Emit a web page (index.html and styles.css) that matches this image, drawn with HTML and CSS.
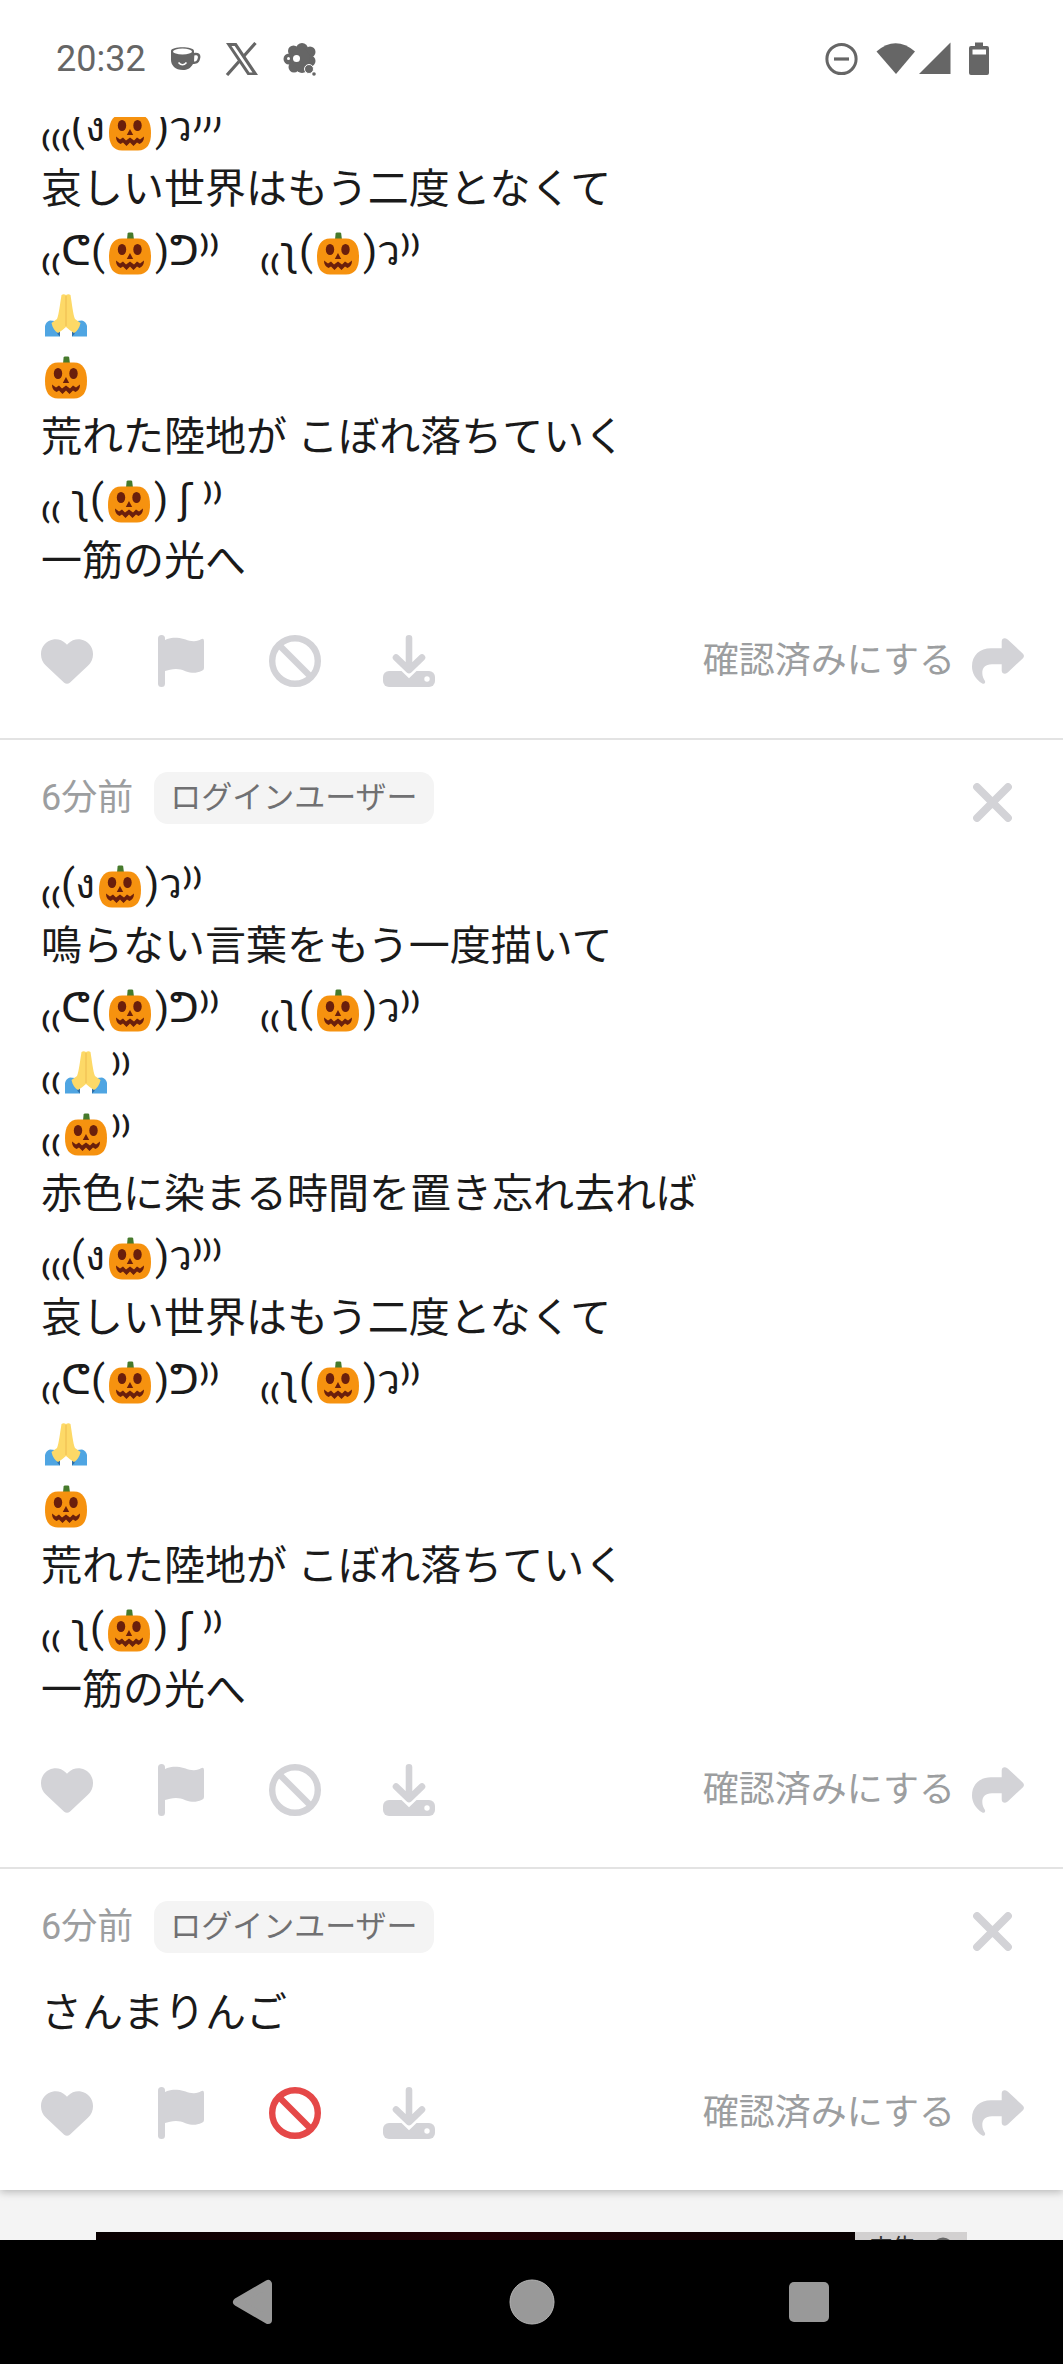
FILE: index.html
```
<!DOCTYPE html>
<html lang="ja">
  <head>
    <meta charset="UTF-8" />
    <meta name="viewport" content="width=device-width, initial-scale=1.0" />
    <title>メッセージ</title>
    <link rel="stylesheet" href="styles.css">
  </head>

  <body>
    <!-- Shared icons -->
    <svg class="sprite" aria-hidden="true">
      <symbol id="pumpkin" viewBox="0 0 42 43">
        <path d="M18 8 L18.6 1.5 Q18.8 0.5 20 0.5 H23 Q24 0.5 24.2 1.5 L25 8 Z" fill="#467a2c" />
        <path d="M13 6.5 H29 C38 6.5 42 14 42 25 C42 36 38 42.5 29 42.5 H13 C4 42.5 0 36 0 25 C0 14 4 6.5 13 6.5 Z" fill="#f6920f" />
        <ellipse cx="13" cy="17.5" rx="4.2" ry="5.6" fill="#6a1f0c" />
        <ellipse cx="28.5" cy="17.5" rx="4.2" ry="5.6" fill="#6a1f0c" />
        <path d="M21 21 L24.2 27 H17.8 Z" fill="#6a1f0c" />
        <path d="M7 28.5 L11 31.5 L14 29.5 L17 32.5 L21 29.5 L25 32.5 L28 29.5 L31 31.5 L35 28.5 C35 32.5 33.5 34.5 30.5 36 L28 34.5 L24.5 38 L21 34.5 L17.5 38 L14 34.5 L11.5 36 C8.5 34.5 7 32.5 7 28.5 Z" fill="#6a1f0c" />
      </symbol>
      <symbol id="pray" viewBox="0 0 42 43">
        <path d="M0 42.5 V32 Q1 27.5 5 26.5 L10 27 L15 38 V42.5 Z" fill="#4fa5e2" />
        <path d="M42 42.5 V32 Q41 27.5 37 26.5 L32 27 L27 38 V42.5 Z" fill="#4fa5e2" />
        <path d="M12 36 L15 38 V42.5 L12.5 40 Z M30 36 L27 38 V42.5 L29.5 40 Z" fill="#2f6fa8" />
        <path d="M16.5 1 Q18.5 -0.5 21 1 Q23.5 -0.5 25.5 1 C27 10 28 20 30 25 L35.5 29 C34.5 34 32 37.5 29 39 C25 36.5 23 34.5 21 33 C19 34.5 17 36.5 13 39 C10 37.5 7.5 34 6.5 29 L12 25 C14 20 15 10 16.5 1 Z" fill="#fdd967" />
        <path d="M21 2 V32" stroke="#eebb50" stroke-width="1" fill="none" />
      </symbol>
      <symbol id="heart" viewBox="0 0 512 512">
        <path d="M47.6 300.4L228.3 469.1c7.5 7 17.4 10.9 27.7 10.9s20.2-3.9 27.7-10.9L464.4 300.4c30.4-28.3 47.6-68 47.6-109.5v-5.8c0-69.9-50.5-129.5-119.4-141C347 36.5 300.6 51.4 268 84L256 96 244 84c-32.6-32.6-79-47.5-124.6-39.9C50.5 55.6 0 115.2 0 185.1v5.8c0 41.5 17.2 81.2 47.6 109.5z" fill="currentColor" />
      </symbol>
      <symbol id="flag" viewBox="0 0 52 52">
        <rect x="3" y="0" width="7" height="52" rx="3.5" fill="currentColor" />
        <path d="M9 5.5 C14 3 18 2.7 22 2.8 C29 3 33 6.5 39 6.3 C42 6.2 44.5 5 46 4.2 Q49 3 49 6 V33 Q49 35 47 35.8 C43 37.7 40 38 37 37.8 C31 37.5 28 34 21 34 C17 34 13 35 9 36.3 Z" fill="currentColor" />
      </symbol>
      <symbol id="ban" viewBox="0 0 52 52">
        <circle cx="26" cy="26" r="22.8" fill="none" stroke="currentColor" stroke-width="6.4" />
        <path d="M10 10 L42 42" stroke="currentColor" stroke-width="6.4" />
      </symbol>
      <symbol id="download" viewBox="0 0 52 52">
        <rect x="0" y="36" width="52" height="16" rx="6" fill="currentColor" />
        <circle cx="44" cy="44" r="2.7" fill="#fff" />
        <path d="M13 22.5 L26 35 L39 22.5" fill="none" stroke="#fff" stroke-width="12" />
        <path d="M26 3.3 V34 M13 22.5 L26 35 L39 22.5" fill="none" stroke="currentColor" stroke-width="6.6" stroke-linecap="round" stroke-linejoin="round" />
      </symbol>
      <symbol id="share" viewBox="0 0 52 52">
        <path d="M29.7 13.3 V6.5 Q29.9 3 33 3.2 Q34.5 3.4 36 4.7 L50.7 18.4 Q53.2 20.9 50.7 23.4 L36 37.3 Q34.5 38.7 33 38.8 Q29.9 38.8 29.7 35.5 V29.3 H20 C13 29.3 10.3 33 10.3 38 C10.3 41.5 11.5 43.5 12.7 45.5 C14 47.7 12.3 49.5 10.3 48.5 C3.5 44.5 0 38 0 31.5 C0 20 8 13.3 19 13.3 Z" fill="currentColor" />
      </symbol>
      <symbol id="close" viewBox="0 0 39 39">
        <path d="M4 4 L35 35 M35 4 L4 35" stroke="currentColor" stroke-width="7.8" stroke-linecap="round" />
      </symbol>
    </svg>

    <header class="status-bar">
      <div class="status-left">
        <span class="clock">20:32</span>
        <svg width="31" height="34" viewBox="0 0 31 34">
          <path d="M1 9 C1 4 24 4 24 9 V11 C29 10 31.500 13 30 17 C29 21.500 26 22 23 22 C20.500 26.500 17 28 13 28 C5 28 1 23 1 18 Z" fill="#666" />
          <ellipse cx="12.500" cy="9.500" rx="9.500" ry="3" fill="#fff" />
          <path d="M24.300 13.500 C28 12.500 28.500 15 27.500 17 C27 18.800 25.500 19.500 24 19.600 Z" fill="#fff" />
          <path d="M8.500 20.500 Q12.500 25 16.500 20.500" fill="none" stroke="#fff" stroke-width="1.600" />
        </svg>
        <svg width="34" height="34" viewBox="0 0 34 34">
          <path d="M1 1 H11.500 L33 33 H22.500 Z M6.500 4 L24.500 30.500 H27.500 L9.700 4 Z" fill="#666" fill-rule="evenodd" />
          <path d="M30.500 1 L18.500 14.500 M14 19.500 L2 33" stroke="#666" stroke-width="3.200" />
        </svg>
        <svg width="34" height="34" viewBox="0 0 34 34">
          <g fill="#666">
            <circle cx="19" cy="7" r="6" />
            <circle cx="10.500" cy="9" r="5.500" />
            <circle cx="27" cy="10" r="5.500" />
            <circle cx="6" cy="17" r="5.500" />
            <circle cx="27" cy="19" r="5.500" />
            <circle cx="11" cy="25" r="5.500" />
            <circle cx="19" cy="25" r="6" />
            <circle cx="17" cy="16" r="10" />
            <circle cx="26" cy="27" r="4.500" stroke="#fff" />
            <circle cx="31" cy="32" r="1.800" />
          </g>
          <circle cx="5.500" cy="16.500" r="1.500" fill="#fff" />
          <circle cx="13.500" cy="16.500" r="3.500" fill="#fff" />
        </svg>
      </div>
      <svg width="164" height="34" viewBox="0 0 164 34" aria-label="Wi-Fi">
        <circle cx="16.500" cy="17" r="14.600" fill="none" stroke="#666" stroke-width="3" />
        <path d="M9 17 H24" stroke="#666" stroke-width="3.200" />
        <path d="M51.500 9.500 Q70.500 -7 90 9.500 L71 32 Z" fill="#666" />
        <path d="M94 32 L125.500 0.500 V32 Z" fill="#666" />
        <path d="M150 0.500 H158 V4 H162 Q164 4 164 6 V31 Q164 33 162 33 H146 Q144 33 144 31 V6 Q144 4 146 4 H150 Z M147.500 7.500 V12.500 H161 V7.500 Z" fill="#666" fill-rule="evenodd" />
      </svg>
    </header>

    <main class="content">
      <div class="posts">
        <article class="post post-scrolled">
          <p class="post-text">
            ₍₍₍(ง<svg class="emoji" role="img" aria-label="🎃"><use href="#pumpkin" /></svg>)ว⁾⁾⁾<br>
            哀しい世界はもう二度となくて<br>
            ₍₍ᕦ(<svg class="emoji" role="img" aria-label="🎃"><use href="#pumpkin" /></svg>)ᕤ⁾⁾　₍₍<span class="arm">ʅ</span>(<svg class="emoji" role="img" aria-label="🎃"><use href="#pumpkin" /></svg>)ว⁾⁾<br>
            <svg class="emoji" role="img" aria-label="🙏"><use href="#pray" /></svg><br>
            <svg class="emoji" role="img" aria-label="🎃"><use href="#pumpkin" /></svg><br>
            荒れた陸地が こぼれ落ちていく<br>
            ₍₍ <span class="arm">ʅ</span>(<svg class="emoji" role="img" aria-label="🎃"><use href="#pumpkin" /></svg>) <span class="arm">ʃ</span> ⁾⁾<br>
            一筋の光へ
          </p>
          <div class="actions">
            <button type="button" aria-label="いいね"><svg class="icon"><use href="#heart" /></svg></button>
            <button type="button" aria-label="通報"><svg class="icon"><use href="#flag" /></svg></button>
            <button type="button" aria-label="ブロック"><svg class="icon"><use href="#ban" /></svg></button>
            <button type="button" aria-label="保存"><svg class="icon"><use href="#download" /></svg></button>
            <button type="button" class="confirm"><span>確認済みにする</span><svg class="icon"><use href="#share" /></svg></button>
          </div>
        </article>

        <article class="post">
          <div class="post-head">
            <time class="time">6分前</time>
            <span class="user-tag">ログインユーザー</span>
            <button type="button" class="close" aria-label="閉じる"><svg><use href="#close" /></svg></button>
          </div>
          <p class="post-text">
            ₍₍(ง<svg class="emoji" role="img" aria-label="🎃"><use href="#pumpkin" /></svg>)ว⁾⁾<br>
            鳴らない言葉をもう一度描いて<br>
            ₍₍ᕦ(<svg class="emoji" role="img" aria-label="🎃"><use href="#pumpkin" /></svg>)ᕤ⁾⁾　₍₍<span class="arm">ʅ</span>(<svg class="emoji" role="img" aria-label="🎃"><use href="#pumpkin" /></svg>)ว⁾⁾<br>
            ₍₍<svg class="emoji" role="img" aria-label="🙏"><use href="#pray" /></svg>⁾⁾<br>
            ₍₍<svg class="emoji" role="img" aria-label="🎃"><use href="#pumpkin" /></svg>⁾⁾<br>
            赤色に染まる時間を置き忘れ去れば<br>
            ₍₍₍(ง<svg class="emoji" role="img" aria-label="🎃"><use href="#pumpkin" /></svg>)ว⁾⁾⁾<br>
            哀しい世界はもう二度となくて<br>
            ₍₍ᕦ(<svg class="emoji" role="img" aria-label="🎃"><use href="#pumpkin" /></svg>)ᕤ⁾⁾　₍₍<span class="arm">ʅ</span>(<svg class="emoji" role="img" aria-label="🎃"><use href="#pumpkin" /></svg>)ว⁾⁾<br>
            <svg class="emoji" role="img" aria-label="🙏"><use href="#pray" /></svg><br>
            <svg class="emoji" role="img" aria-label="🎃"><use href="#pumpkin" /></svg><br>
            荒れた陸地が こぼれ落ちていく<br>
            ₍₍ <span class="arm">ʅ</span>(<svg class="emoji" role="img" aria-label="🎃"><use href="#pumpkin" /></svg>) <span class="arm">ʃ</span> ⁾⁾<br>
            一筋の光へ
          </p>
          <div class="actions">
            <button type="button" aria-label="いいね"><svg class="icon"><use href="#heart" /></svg></button>
            <button type="button" aria-label="通報"><svg class="icon"><use href="#flag" /></svg></button>
            <button type="button" aria-label="ブロック"><svg class="icon"><use href="#ban" /></svg></button>
            <button type="button" aria-label="保存"><svg class="icon"><use href="#download" /></svg></button>
            <button type="button" class="confirm"><span>確認済みにする</span><svg class="icon"><use href="#share" /></svg></button>
          </div>
        </article>

        <article class="post">
          <div class="post-head">
            <time class="time">6分前</time>
            <span class="user-tag">ログインユーザー</span>
            <button type="button" class="close" aria-label="閉じる"><svg><use href="#close" /></svg></button>
          </div>
          <p class="post-text">さんまりんご</p>
          <div class="actions">
            <button type="button" aria-label="いいね"><svg class="icon"><use href="#heart" /></svg></button>
            <button type="button" aria-label="通報"><svg class="icon"><use href="#flag" /></svg></button>
            <button type="button" class="blocked" aria-label="ブロック解除"><svg class="icon"><use href="#ban" /></svg></button>
            <button type="button" aria-label="保存"><svg class="icon"><use href="#download" /></svg></button>
            <button type="button" class="confirm"><span>確認済みにする</span><svg class="icon"><use href="#share" /></svg></button>
          </div>
        </article>
      </div>

      <aside class="ad">
        <div class="ad-image"></div>
        <div class="ad-label">
          <span>広告</span>
          <svg width="22" height="22" viewBox="0 0 22 22">
            <circle cx="11" cy="11" r="9" fill="none" stroke="#666" stroke-width="3" />
            <path d="M11 9 V16" stroke="#666" stroke-width="3" />
          </svg>
        </div>
      </aside>
    </main>

    <nav class="nav-bar">
      <button type="button" aria-label="戻る">
        <svg width="46" height="46" viewBox="0 0 46 46"><path d="M6 23 L37 5 V41 Z" fill="#999" stroke="#999" stroke-width="8" stroke-linejoin="round" /></svg>
      </button>
      <button type="button" aria-label="ホーム">
        <svg width="46" height="46" viewBox="0 0 46 46"><circle cx="23" cy="23" r="22" fill="#999" stroke="#b5b5b5" stroke-width="1" /></svg>
      </button>
      <button type="button" aria-label="履歴">
        <svg width="46" height="46" viewBox="0 0 46 46"><rect x="3" y="3" width="40" height="40" rx="5" fill="#999" /></svg>
      </button>
    </nav>
  </body>
</html>
```
FILE: styles.css
```
:root {
  --text-color: #1a1a1a;
  --muted-color: #9c9ea0;
  --icon-color: #d3d3d7;
  --line-color: #e3e3e3;
  --bg-color: #f4f4f4;
  --danger-color: #e54848;
}

* {
  margin: 0;
  padding: 0;
  box-sizing: border-box;
}

body {
  background-color: var(--bg-color);
  color: var(--text-color);
  font-family: Roboto, "Noto Sans CJK JP", sans-serif;
  height: 100vh;
  display: flex;
  flex-direction: column;
}

button {
  background: none;
  border: none;
  color: inherit;
  font: inherit;
  cursor: pointer;
}

svg {
  display: block;
}

.sprite {
  position: absolute;
  width: 0;
  height: 0;
}

/* status bar */
.status-bar {
  flex: none;
  display: flex;
  justify-content: space-between;
  align-items: center;
  height: 117px;
  padding: 0 74px 0 56px;
  background-color: #fff;
}

.status-left {
  display: flex;
  align-items: center;
  gap: 24px;
}

.clock {
  color: #666;
  font-size: 36px;
}

/* posts */
.content {
  flex: 1;
  min-height: 0;
  overflow: hidden;
}

.posts {
  background-color: #fff;
  box-shadow: 0 2px 8px rgba(0, 0, 0, 0.25);
}

.post {
  padding: 32px 39px 51px 41px;
}

.post + .post {
  border-top: 2px solid var(--line-color);
}

.post-scrolled {
  margin-top: -21px;
  padding-top: 0;
}

.post-head {
  display: flex;
  align-items: flex-start;
  margin-bottom: 29px;
  line-height: 52px;
}

.time {
  color: var(--muted-color);
  font-size: 36px;
}

.user-tag {
  margin-left: 21px;
  padding: 0 16px;
  border-radius: 14px;
  background-color: var(--bg-color);
  color: #707072;
  font-size: 31px;
}

.close {
  margin-left: auto;
  padding: 11px 12px 0;
  color: var(--icon-color);
}

.close svg {
  width: 39px;
  height: 39px;
}

.post-text {
  font-size: 41px;
  line-height: 62px;
}

.arm {
  font-family: "DejaVu Sans", sans-serif;
}

.emoji {
  display: inline-block;
  width: 42px;
  height: 43px;
  margin: 0 4px;
  vertical-align: -10px;
}

.actions {
  display: flex;
  align-items: center;
  gap: 62px;
  margin-top: 43px;
  color: var(--icon-color);
}

.icon {
  width: 52px;
  height: 52px;
}

.blocked {
  color: var(--danger-color);
}

.confirm {
  display: flex;
  align-items: center;
  gap: 17px;
  margin-left: auto;
}

.confirm span {
  color: var(--muted-color);
  font-size: 36px;
  line-height: 52px;
}

/* ad banner */
.ad {
  display: flex;
  width: 82%;
  height: 160px;
  margin: 42px auto 0;
}

.ad-image {
  flex: 1;
  background: linear-gradient(to right, #080000, #220004 50%, #080000);
}

.ad-label {
  display: flex;
  align-items: center;
  gap: 16px;
  height: 32px;
  padding: 0 13px;
  background-color: #d2d0d0;
  color: #333;
  font-size: 24px;
  line-height: 32px;
}

/* system navigation */
.nav-bar {
  flex: none;
  display: flex;
  justify-content: space-evenly;
  align-items: center;
  height: 124px;
  background-color: #000;
}
```
